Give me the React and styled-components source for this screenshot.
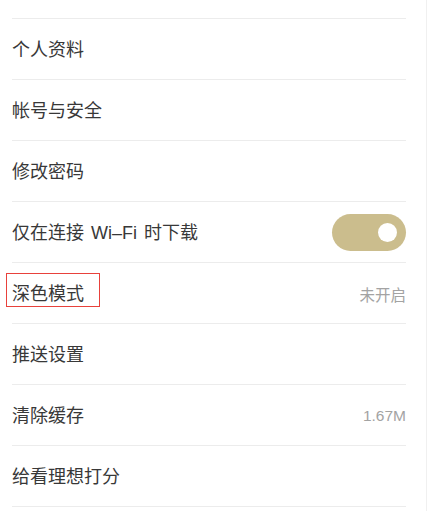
import React, { useState } from "react";
import styled, { createGlobalStyle } from "styled-components";

const GlobalStyle = createGlobalStyle`
  html, body {
    margin: 0;
    padding: 0;
    background: #ffffff;
  }
  body {
    font-family: "Liberation Sans", "Noto Sans CJK SC", sans-serif;
    -webkit-font-smoothing: antialiased;
  }
`;

const Page = styled.div`
  width: 427px;
  height: 511px;
  box-sizing: border-box;
  border-right: 1px solid #f0f0f0;
  overflow: hidden;
  background: #fff;
`;

const List = styled.ul`
  list-style: none;
  margin: 0;
  padding: 0 20px 0 12px;
`;

const TopCap = styled.li`
  height: 18px;
  border-bottom: 1px solid #ececec;
`;

const Row = styled.li`
  height: 60px;
  display: flex;
  align-items: center;
  justify-content: space-between;
  border-bottom: 1px solid #ececec;
`;

const Label = styled.span`
  position: relative;
  padding-top: 2px;
  font-size: 18px;
  line-height: 24px;
  color: #383838;
  white-space: nowrap;
  word-spacing: 2px;

  ${(p) =>
    p.$marked &&
    `
    &::after {
      content: '';
      position: absolute;
      left: -6px;
      right: -16px;
      top: -7px;
      bottom: -1px;
      border: 1px solid #e8413b;
    }
  `}
`;

const Value = styled.span`
  padding-top: 2px;
  font-size: 15.5px;
  color: #a3a3a3;
`;

const Track = styled.button`
  width: 74px;
  height: 37px;
  border: none;
  padding: 0;
  border-radius: 19px;
  background: ${(p) => (p.$on ? "#cbbd8d" : "#e5e5e5")};
  position: relative;
  cursor: pointer;
`;

const Knob = styled.span`
  position: absolute;
  top: 9px;
  left: ${(p) => (p.$on ? "46px" : "9px")};
  width: 19px;
  height: 19px;
  border-radius: 50%;
  background: #fff;
`;

const items = [
  { label: "个人资料" },
  { label: "帐号与安全" },
  { label: "修改密码" },
  { label: "仅在连接 Wi–Fi 时下载", toggle: true },
  { label: "深色模式", value: "未开启", marked: true },
  { label: "推送设置" },
  { label: "清除缓存", value: "1.67M" },
  { label: "给看理想打分" },
];

const App = () => {
  const [wifiOnly, setWifiOnly] = useState(true);

  return (
    <>
      <GlobalStyle />
      <Page>
        <List>
          <TopCap />
          {items.map((item) => (
            <Row key={item.label}>
              <Label $marked={item.marked}>{item.label}</Label>
              {item.value && <Value>{item.value}</Value>}
              {item.toggle && (
                <Track $on={wifiOnly} onClick={() => setWifiOnly(!wifiOnly)}>
                  <Knob $on={wifiOnly} />
                </Track>
              )}
            </Row>
          ))}
        </List>
      </Page>
    </>
  );
};

export default App;
